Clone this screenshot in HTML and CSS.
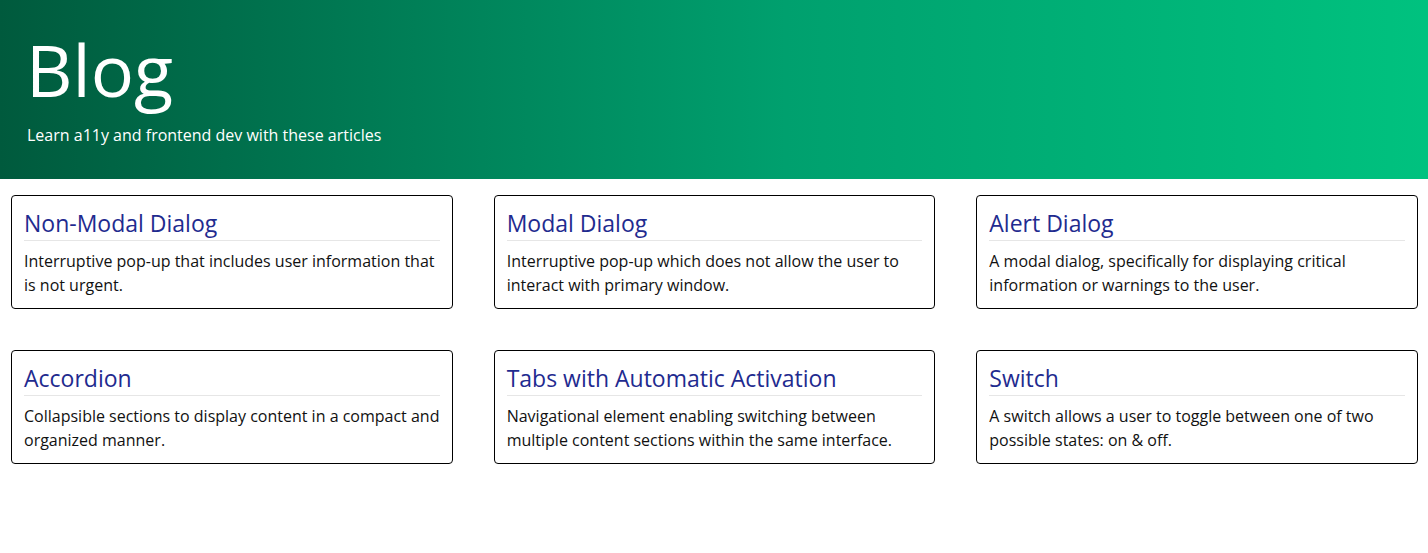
FILE: index.html
```html
<!DOCTYPE html>
<html lang="en">
<head>
<meta charset="utf-8">
<title>Blog</title>
<link rel="stylesheet" href="styles.css">
</head>
<body>
<header class="hero">
  <h1 class="hero-title">Blog</h1>
  <p class="hero-sub">Learn a11y and frontend dev with these articles</p>
</header>
<main class="grid">
  <article class="card">
    <h2 class="card-title">Non-Modal Dialog</h2>
    <p class="card-text">Interruptive pop-up that includes user information that is not urgent.</p>
  </article>
  <article class="card">
    <h2 class="card-title">Modal Dialog</h2>
    <p class="card-text">Interruptive pop-up which does not allow the user to interact with primary window.</p>
  </article>
  <article class="card">
    <h2 class="card-title">Alert Dialog</h2>
    <p class="card-text">A modal dialog, specifically for displaying critical information or warnings to the user.</p>
  </article>
  <article class="card">
    <h2 class="card-title">Accordion</h2>
    <p class="card-text">Collapsible sections to display content in a compact and organized manner.</p>
  </article>
  <article class="card">
    <h2 class="card-title">Tabs with Automatic Activation</h2>
    <p class="card-text">Navigational element enabling switching between multiple content sections within the same interface.</p>
  </article>
  <article class="card">
    <h2 class="card-title">Switch</h2>
    <p class="card-text">A switch allows a user to toggle between one of two possible states: on &amp; off.</p>
  </article>
</main>
</body>
</html>
```

FILE: styles.css
```css
* { box-sizing: border-box; }
html, body { margin: 0; padding: 0; background: #fff; }
body {
  font-family: "Open Sans", "Noto Sans", sans-serif;
  color: #111;
}
.hero {
  height: 179px;
  padding: 20px 26px 0;
  background: linear-gradient(to right, #005a3d 0%, #00a06e 55%, #00c27f 100%);
  color: #fff;
}
.hero-title {
  margin: 0;
  font-size: 72px;
  font-weight: 400;
  line-height: normal;
}
.hero-sub {
  margin: 6px 0 0 1px;
  font-size: 16px;
  line-height: normal;
}
.grid {
  display: grid;
  grid-template-columns: repeat(3, 1fr);
  column-gap: 41px;
  row-gap: 41px;
  padding: 16px 10px 0 11px;
}
.card {
  border: 1px solid #000;
  border-radius: 4px;
  padding: 11px 12px 11px;
}
.card-title {
  margin: 0 0 8px;
  font-size: 23px;
  font-weight: 400;
  line-height: 33px;
  color: #1f2b8f;
  border-bottom: 1px solid #e6e6e6;
}
.card-text {
  margin: 0;
  font-size: 16px;
  line-height: 24px;
  color: #111;
}
```
